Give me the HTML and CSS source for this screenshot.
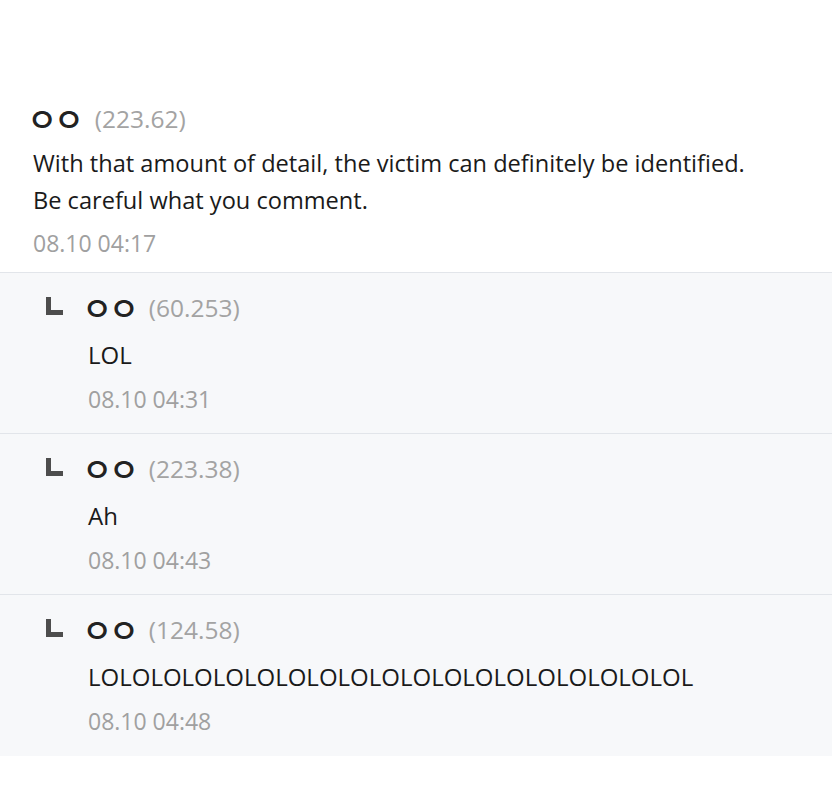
FILE: index.html
```html
<!DOCTYPE html>
<html>
<head>
<meta charset="utf-8">
<link rel="stylesheet" href="styles.css">
</head>
<body>
<div class="comments">
  <div class="comment">
    <div class="head"><span class="nick">ㅇㅇ</span><span class="ip">(223.62)</span></div>
    <div class="text">With that amount of detail, the victim can definitely be identified.<br>Be careful what you comment.</div>
    <div class="date">08.10 04:17</div>
  </div>
  <div class="reply">
    <svg class="arrow" width="18" height="19" viewBox="0 0 18 19"><path d="M0 0H5V13H17V18H0Z" fill="#4d4d4d"/></svg>
    <div class="body">
      <div class="head"><span class="nick">ㅇㅇ</span><span class="ip">(60.253)</span></div>
      <div class="text">LOL</div>
      <div class="date">08.10 04:31</div>
    </div>
  </div>
  <div class="reply">
    <svg class="arrow" width="18" height="19" viewBox="0 0 18 19"><path d="M0 0H5V13H17V18H0Z" fill="#4d4d4d"/></svg>
    <div class="body">
      <div class="head"><span class="nick">ㅇㅇ</span><span class="ip">(223.38)</span></div>
      <div class="text">Ah</div>
      <div class="date">08.10 04:43</div>
    </div>
  </div>
  <div class="reply">
    <svg class="arrow" width="18" height="19" viewBox="0 0 18 19"><path d="M0 0H5V13H17V18H0Z" fill="#4d4d4d"/></svg>
    <div class="body">
      <div class="head"><span class="nick">ㅇㅇ</span><span class="ip">(124.58)</span></div>
      <div class="text">LOLOLOLOLOLOLOLOLOLOLOLOLOLOLOLOLOLOLOL</div>
      <div class="date">08.10 04:48</div>
    </div>
  </div>
</div>
</body>
</html>
```

FILE: styles.css
```css
html, body {
  margin: 0;
  padding: 0;
  background: #ffffff;
}
body {
  font-family: "Open Sans", "Noto Sans", "Noto Sans CJK KR", sans-serif;
  color: #1a1a1a;
}
.comments {
  padding-top: 103px;
}
.comment {
  padding: 0 0 14px 33px;
  border-bottom: 1px solid #e2e5ea;
}
.head {
  display: flex;
  align-items: center;
  height: 30px;
}
.nick {
  font-family: "Noto Sans CJK KR", sans-serif;
  font-weight: 500;
  font-size: 33px;
  line-height: 30px;
  color: #222;
  letter-spacing: -3.5px;
  margin-left: -6px;
  margin-right: 14px;
}
.ip {
  font-size: 24.5px;
  color: #a3a3a3;
}
.text {
  font-size: 23.6px;
  line-height: 37px;
  margin-top: 12px;
}
.date {
  font-size: 23px;
  line-height: 30px;
  color: #a0a0a0;
  margin-top: 9px;
}
.reply {
  display: flex;
  align-items: flex-start;
  background: #f7f8fa;
  padding: 19px 0 19px 46px;
  border-bottom: 1px solid #e2e5ea;
}
.reply:last-child {
  border-bottom: none;
  padding-bottom: 20px;
}
.arrow {
  flex: none;
  margin-top: 5px;
  margin-right: 24px;
}
.reply .nick {
  margin-right: 13px;
}
.reply .text {
  font-size: 24px;
  margin-top: 14px;
}
.reply .date {
  margin-top: 11px;
}
```
